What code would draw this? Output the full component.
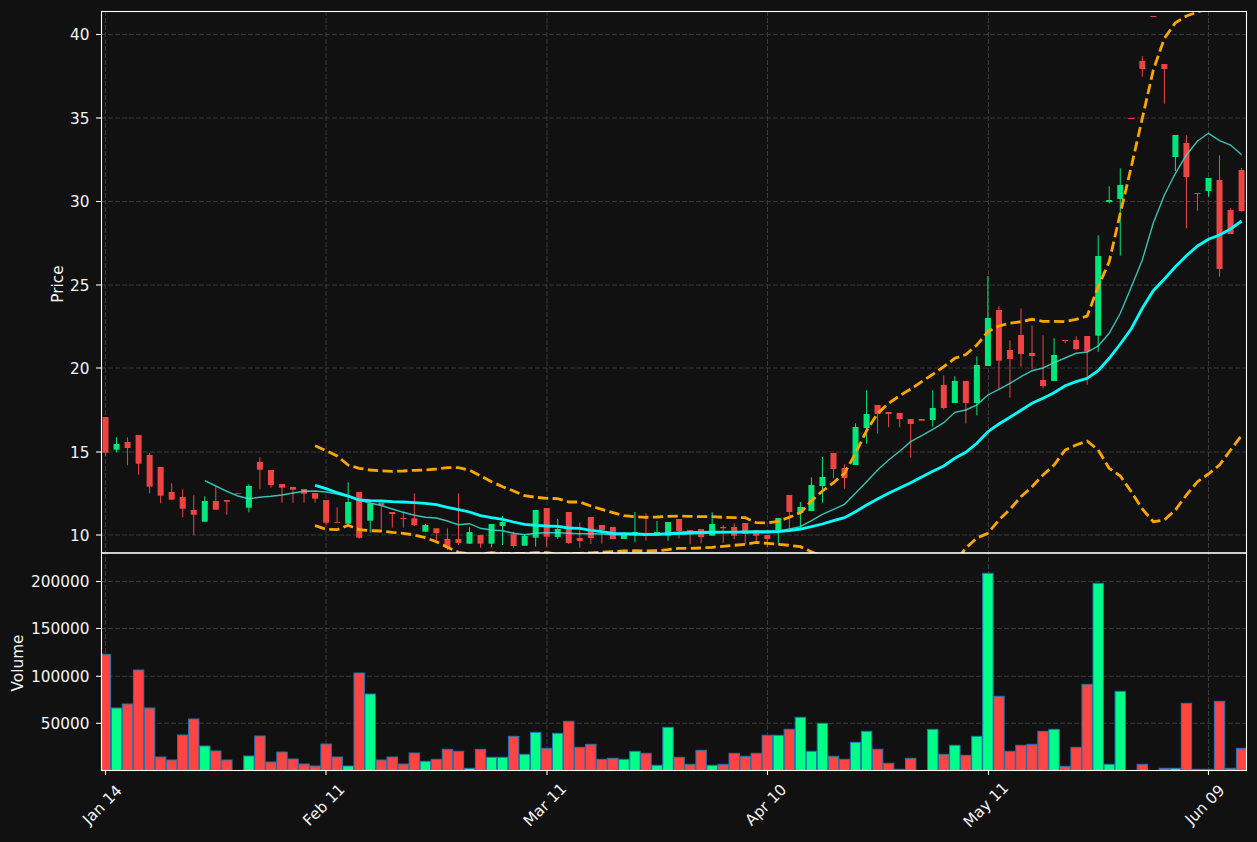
type Candle = [up: number, wickTop: number, bodyTop: number, bodyBottom: number, wickBottom: number];

const BAR_STEP = 11.03;
const FIRST_BAR = 105.5;
const barX = (i: number) => FIRST_BAR + BAR_STEP * i;

// pixel rows read off the chart, one entry per trading day
const candles: Candle[] = [
  [0, 417, 417, 452.7, 456], [1, 437.3, 444, 449.7, 452.3], [0, 437.3, 442, 448, 465.3], [0, 435, 435, 463.7, 474.7],
  [0, 452.7, 455, 486.7, 493.3], [0, 467, 467, 495.7, 503.3], [0, 483.3, 492, 499.7, 499.7], [0, 489.3, 497, 508.7, 517.3],
  [0, 495.3, 510, 514.7, 535.3], [1, 496.3, 501, 521.7, 521.7], [0, 487.3, 501, 509.7, 509.7], [0, 500, 500, 501.7, 514.7],
  [0, 493, 493, 493.7, 493.7], [1, 484.3, 486, 507.7, 512.3], [0, 457.3, 462, 469.7, 489.3], [0, 470, 470, 485, 487.7],
  [0, 484, 484, 487.7, 502.7], [0, 487, 487, 489.7, 502.7], [0, 489, 489, 493.7, 502.7], [0, 493, 493, 498.7, 502.7],
  [0, 500, 500, 522.7, 524.7], [0, 507.3, 522.3, 523, 523], [1, 482.3, 502, 523.7, 524], [0, 492, 492, 537.7, 538.7],
  [1, 503.3, 503.3, 520.7, 532.7], [0, 503, 503, 505, 529.3], [0, 512, 512, 514, 527.7], [0, 511.7, 518, 519, 527.7],
  [0, 493.3, 518.3, 525, 526], [1, 524, 525, 531.7, 531.7], [0, 528.3, 528.3, 533, 540], [0, 528.3, 539, 547.3, 550],
  [0, 493.3, 539, 543, 545], [1, 527.3, 532, 543.7, 543.7], [0, 535, 535, 543.7, 547.7], [1, 524, 524, 543.7, 547.3],
  [1, 516, 522, 526, 545], [0, 531.7, 534.3, 546, 547.7], [1, 535, 536, 545.7, 545.7], [1, 510, 510, 537.7, 546.7],
  [0, 508, 508, 536.7, 546.7], [1, 519, 529, 537, 539], [0, 512, 512, 543, 544], [0, 522.3, 538, 541, 547.7],
  [0, 517, 517, 538, 544], [0, 525, 525, 530, 543.7], [0, 527, 527, 539, 539], [1, 532, 535, 539, 539],
  [1, 512, 532, 534.3, 542.3], [0, 513.3, 534, 536, 540.7], [1, 521, 532, 535.3, 535.3], [1, 522, 522, 535.7, 540.7],
  [0, 519, 519, 531, 538.3], [0, 530, 530, 531.3, 544.3], [0, 529, 529, 537, 543.3], [1, 512.3, 524, 535.7, 535.7],
  [0, 525.3, 527, 528.3, 542.7], [0, 523.3, 527, 535.7, 539.3], [0, 523, 523, 534, 544.3], [0, 530, 530, 535.7, 542.3],
  [0, 535, 535, 539, 547.3], [1, 518, 518, 530, 545], [0, 495, 495, 512, 530], [1, 502, 507, 513, 528.3],
  [1, 477.3, 485, 511, 511], [1, 457, 477, 486, 502.7], [0, 453, 453, 469, 478.3], [0, 464.3, 468, 478, 488.7],
  [1, 423.3, 427, 465, 465], [1, 390.3, 414, 428, 443.7], [0, 405, 405, 414, 433.7], [0, 412, 412, 414, 427.3],
  [0, 413, 413, 419, 427.3], [0, 419, 419, 424, 457.7], [0, 419, 419, 420.7, 420.7], [1, 390.3, 408, 420, 426.7],
  [0, 375.3, 385, 408, 409.7], [1, 376.3, 381, 403, 403], [0, 381, 381, 403, 423.5], [1, 356.3, 365, 403, 415.3],
  [1, 276, 318, 366, 366], [0, 306.3, 310, 360.7, 389], [0, 340.3, 350, 359, 397.7], [0, 308.3, 335, 354, 366.7],
  [0, 325.3, 353, 356, 369], [0, 335.3, 380, 386, 388.3], [1, 338.3, 355, 381, 381], [0, 340, 340, 341, 343.3],
  [0, 336.3, 340, 349, 350.3], [0, 336, 336, 351.3, 384.7], [1, 235.3, 256, 335.7, 351.7], [1, 186.3, 200, 202, 203.3],
  [1, 168.3, 185, 199, 255.7], [0, 118, 118, 119, 119], [0, 56.3, 61, 69, 76.7], [0, 16, 16, 17, 17],
  [0, 64, 64, 69, 103.7], [1, 135, 135, 157, 171], [0, 135.3, 143, 177, 228.3], [0, 193, 193, 194, 210.7],
  [1, 178, 178, 191, 196.7], [0, 155.3, 180, 269, 276.7], [0, 208.3, 210, 234, 234], [0, 168, 170, 211, 211.7],
];

// [up, top row of the bar]; null for days without a visible bar
const volumes: ([up: number, top: number] | null)[] = [
  [0, 654.3], [1, 708], [0, 704], [0, 670], [0, 708], [0, 757], [0, 760], [0, 735], [0, 719], [1, 746],
  [0, 751], [0, 760], null, [1, 756], [0, 736], [0, 762], [0, 752], [0, 759], [0, 764], [0, 766],
  [0, 744], [0, 757], [1, 766], [0, 673], [1, 694], [0, 760], [0, 757], [0, 764], [0, 753], [1, 761.3],
  [0, 759.3], [0, 749.3], [0, 751.3], [1, 768.3], [0, 749.3], [1, 757.3], [1, 757.3], [0, 736.3], [1, 754.3], [1, 732.3],
  [0, 748.3], [1, 733.3], [0, 721.3], [0, 747.3], [0, 744.3], [0, 759.3], [0, 758.3], [1, 759.3], [1, 751.3], [0, 753.3],
  [1, 765.3], [1, 727.3], [0, 757.3], [0, 764.3], [0, 750.3], [1, 765.3], [0, 764.3], [0, 753.3], [0, 756.3], [0, 753.3],
  [0, 735.3], [1, 735.3], [0, 729.3], [1, 717.3], [1, 751.3], [1, 723.3], [0, 756.3], [0, 759.3], [1, 742.3], [1, 731.3],
  [0, 749.3], [0, 763.3], [0, 769.3], [0, 758.3], null, [1, 729.3], [0, 754.3], [1, 745.3], [0, 755.3], [1, 736.3],
  [1, 573.3], [0, 696.3], [0, 751.3], [0, 745.3], [0, 744.3], [0, 731.3], [1, 729.3], [0, 766.3], [0, 747.3], [0, 684.3],
  [1, 583.3], [1, 764.3], [1, 691.3], null, [0, 764.3], null, [0, 768.3], [1, 768.3], [0, 703.3], [0, 769.3],
  [0, 769.3], [0, 701.3], [0, 768.3], [0, 748.3],
];

const fastAverage = [
  480.7, 486, 491.3, 496, 498.7, 497.3, 496.3, 495, 493, 491.3, 491, 492, 494, 496.7, 500.3, 503, 505.5, 509, 512.3, 515.3,
  517.3, 518, 521, 524.7, 523.7, 528.3, 530, 530.7, 533.3, 534.7, 533.3, 532.7, 532.7, 533.3, 533.7, 533.7, 534, 534.7, 534.7, 534.7,
  534.7, 534.7, 534.5, 534.3, 534, 533.5, 533, 532.5, 532, 531.5, 531.2, 531, 531, 529, 526.7, 520.7, 514.3, 509.3, 504.3, 493.3,
  481.7, 470, 460, 451.3, 441.7, 435.7, 429.3, 422.7, 412.3, 410, 405, 395, 389.3, 383.3, 376.7, 370.7, 368, 362.7, 358, 353.3,
  352, 346, 333.3, 313.3, 287, 260, 223, 195, 173.3, 155, 141, 133.3, 140.7, 145, 154.7,
];

const slowAverage = [
  485.3, 488.7, 492.7, 496, 500, 500.7, 501, 501.7, 502, 502.7, 503.3, 504.7, 507.3, 509.7, 512, 515.7, 517.7, 519.3, 522, 524.3,
  525.3, 526, 526.3, 528, 528.3, 530.3, 531.7, 533.3, 533.7, 534, 534.3, 534.3, 533.7, 533, 532.5, 532.3, 532.2, 532.2, 532.1, 532, 532,
  532, 531.7, 530.7, 529, 526.7, 524, 520.7, 517.7, 511.7, 505, 499, 493.3, 488, 482.7, 477, 471.3, 466, 458.3, 452.3, 443.3, 431.7,
  424, 417.3, 410.3, 403.3, 398.3, 392.7, 385.7, 381.7, 378.3, 370.7, 358.3, 344, 328.7, 308.3, 290.7, 279, 266.7, 255.7, 246, 239.3, 235, 229, 221,
];

const upperBand = [
  445.7, 450.7, 456, 465, 468.3, 470, 470.8, 471.3, 471, 470.3, 470, 469, 467.7, 467.7, 470.3, 475.7, 481.7, 486.7, 491, 495.7,
  497.3, 498.3, 498.7, 502, 502, 506, 509.3, 512.7, 515.7, 516.7, 517.3, 517, 516.3, 516, 516.3, 516.7, 516.7, 517.3, 517.7, 517.7,
  522.7, 523, 521.3, 517.3, 512.7, 501, 491, 482.7, 473.3, 453.3, 430.7, 413.3, 403.3, 395.7, 389, 381.7, 374.3, 366.7, 358.3, 354.5,
  345, 331.7, 326, 323.3, 321.7, 319.3, 321.3, 321.3, 321.7, 319.3, 316, 286.7, 261.7, 213.3, 166.7, 118.3, 70, 38.3, 22.7, 16, 12, 8, 5,
];

const lowerBand = [
  525.7, 529.3, 529.7, 525.3, 529.7, 530.7, 531, 532.3, 533.3, 535, 537.7, 541.7, 547.3, 552.3, 554, 554, 552.7, 553.3, 553.3, 553.3,
  552.7, 552.7, 554, 553.5, 553.3, 552.8, 552.3, 551.7, 551, 550.7, 551, 550.7, 549.7, 548.3, 548.3, 548, 547.3, 546.3, 545.3, 544.3,
  542.3, 543.3, 544.3, 545.3, 546.7, 551.7, 556.7, 563, 568, 572, 575, 577, 578, 578, 577, 575, 572, 568, 562, 548,
  538, 533.3, 520, 509.3, 496.7, 486.7, 475, 465, 450, 445, 441, 450, 468.3, 476, 491.7, 509, 521.7, 520, 510, 495, 481.7, 474, 465, 450, 435.3,
];

const dateTicks = [
  { x: 105.5, label: 'Jan 14', cx: 102.5 },
  { x: 326, label: 'Feb 11', cx: 324 },
  { x: 547, label: 'Mar 11', cx: 545 },
  { x: 767.5, label: 'Apr 10', cx: 766 },
  { x: 988.5, label: 'May 11', cx: 986 },
  { x: 1208.5, label: 'Jun 09', cx: 1205 },
];

const priceTicks = [
  { y: 34.5, label: '40' }, { y: 118, label: '35' }, { y: 201.5, label: '30' }, { y: 285, label: '25' },
  { y: 368, label: '20' }, { y: 452, label: '15' }, { y: 535, label: '10' },
];

const volumeTicks = [
  { y: 581.5, label: '200000' }, { y: 628.5, label: '150000' }, { y: 676.3, label: '100000' }, { y: 723.3, label: '50000' },
];

function polyline(values: number[], startIndex: number) {
  return values.map((y, n) => `${barX(startIndex + n).toFixed(1)},${y}`).join(' ');
}

function AxisText({ y, label }: { y: number; label: string }) {
  return <text x={89.5} y={y + 0.8} textAnchor="end" dominantBaseline="central" className="fill-[#f5f5f5] text-[15.3px] [font-family:'DejaVu_Sans']">{label}</text>;
}

export default function App() {
  return (
    <div className="h-[842px] w-[1257px] overflow-hidden bg-[#111111]">
      <svg width={1257} height={842} viewBox="0 0 1257 842" className="block">
        <defs>
          <clipPath id="priceArea"><rect x={101} y={11} width={1145} height={542} /></clipPath>
          <clipPath id="volumeArea"><rect x={101} y={553} width={1145} height={217} /></clipPath>
        </defs>

        <g stroke="#3a3a3a" strokeWidth={1} strokeDasharray="5 2" fill="none">
          {dateTicks.map((t) => <line key={t.label} x1={t.x} x2={t.x} y1={11} y2={770} />)}
          {[...priceTicks, ...volumeTicks].map((t) => <line key={t.label} x1={101} x2={1246} y1={t.y} y2={t.y} />)}
        </g>

        <g clipPath="url(#volumeArea)">
          {volumes.map((bar, i) => bar && (
            <rect key={i} x={barX(i) - 5.2} y={bar[1]} width={10.4} height={772 - bar[1]} fill={bar[0] ? '#00ff88' : '#ff4444'} stroke="#1f77b4" strokeWidth={1} />
          ))}
        </g>

        <g clipPath="url(#priceArea)">
          {candles.map(([up, wickTop, bodyTop, bodyBottom, wickBottom], i) => {
            const color = up ? '#00e67a' : '#ef4444';
            const x = barX(i);
            return (
              <g key={i}>
                <line x1={x} x2={x} y1={wickTop} y2={wickBottom} stroke={color} strokeWidth={1} />
                <rect x={x - 3} y={bodyTop} width={6} height={bodyBottom - bodyTop} fill={color} />
              </g>
            );
          })}
          <polyline points={polyline(fastAverage, 9)} fill="none" stroke="#40e0d0" strokeOpacity={0.85} strokeWidth={1.4} />
          <polyline points={polyline(slowAverage, 19)} fill="none" stroke="#00ffff" strokeWidth={2.8} />
          <polyline points={polyline(upperBand, 19)} fill="none" stroke="#ffa500" strokeWidth={2.8} strokeDasharray="10.3 4.4" />
          <polyline points={polyline(lowerBand, 19)} fill="none" stroke="#ffa500" strokeWidth={2.8} strokeDasharray="10.3 4.4" />
        </g>

        <g fill="none" stroke="#ffffff" strokeWidth={1.1}>
          <rect x={101.5} y={11.5} width={1145} height={541.5} />
          <rect x={101.5} y={553} width={1145} height={217.5} />
          {dateTicks.map((t) => <line key={t.label} x1={t.x} x2={t.x} y1={770} y2={775} />)}
          {[...priceTicks, ...volumeTicks].map((t) => <line key={t.label} x1={96} x2={101} y1={t.y} y2={t.y} />)}
        </g>

        {priceTicks.map((t) => <AxisText key={t.label} y={t.y} label={t.label} />)}
        {volumeTicks.map((t) => <AxisText key={t.label} y={t.y} label={t.label} />)}

        <text transform="translate(57.5 284) rotate(-90)" textAnchor="middle" dominantBaseline="central" className="fill-[#f5f5f5] text-[15.3px] [font-family:'DejaVu_Sans']">Price</text>
        <text transform="translate(17.5 663) rotate(-90)" textAnchor="middle" dominantBaseline="central" className="fill-[#f5f5f5] text-[15.3px] [font-family:'DejaVu_Sans']">Volume</text>

        {dateTicks.map((t) => (
          <text key={t.label} transform={`translate(${t.cx} 805) rotate(-45)`} textAnchor="middle" dominantBaseline="central" className="fill-[#f5f5f5] text-[15.3px] [font-family:'DejaVu_Sans']">{t.label}</text>
        ))}
      </svg>
    </div>
  );
}
